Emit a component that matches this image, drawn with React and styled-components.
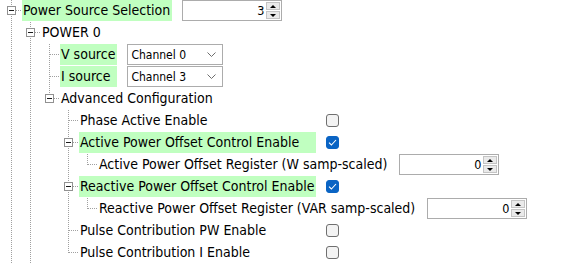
import React, { Fragment } from "react";
import styled, { createGlobalStyle, css } from "styled-components";

const LINE = "#a0a0a0";
const GREEN = "#c0ffc0";
const FONT = `"DejaVu Sans Condensed", "DejaVu Sans", Verdana, sans-serif`;

const dots = (dir) =>
  `repeating-linear-gradient(${dir}, ${LINE} 0 1px, transparent 1px 2px)`;

const tree = [
  {
    label: "Power Source Selection",
    hl: true,
    more: true,
    control: { type: "spin", value: "3" },
    children: [
      {
        label: "POWER 0",
        more: true,
        children: [
          { label: "V source", hl: true, control: { type: "select", value: "Channel 0" } },
          { label: "I source", hl: true, control: { type: "select", value: "Channel 3" } },
          {
            label: "Advanced Configuration",
            children: [
              { label: "Phase Active Enable", control: { type: "check" } },
              {
                label: "Active Power Offset Control Enable",
                hl: true,
                control: { type: "check", checked: true },
                children: [
                  {
                    label: "Active Power Offset Register (W samp-scaled)",
                    control: { type: "spin", value: "0" },
                  },
                ],
              },
              {
                label: "Reactive Power Offset Control Enable",
                hl: true,
                control: { type: "check", checked: true },
                children: [
                  {
                    label: "Reactive Power Offset Register (VAR samp-scaled)",
                    control: { type: "spin", value: "0" },
                  },
                ],
              },
              { label: "Pulse Contribution PW Enable", control: { type: "check" } },
              { label: "Pulse Contribution I Enable", control: { type: "check" } },
            ],
          },
        ],
      },
    ],
  },
];

function Control({ control }) {
  if (control.type === "spin") {
    return (
      <Spinner>
        <SpinValue>{control.value}</SpinValue>
        <SpinButtons>
          <SpinButton>
            <Arrow $up />
          </SpinButton>
          <SpinButton>
            <Arrow />
          </SpinButton>
        </SpinButtons>
      </Spinner>
    );
  }
  if (control.type === "select") {
    return (
      <Select>
        <SelectValue>{control.value}</SelectValue>
        <svg width="9" height="6" viewBox="0 0 9 6">
          <path d="M0.5 0.5 L4.5 4.5 L8.5 0.5" fill="none" stroke="#6d6d6d" strokeWidth="1" />
        </svg>
      </Select>
    );
  }
  return (
    <Check $checked={control.checked}>
      {control.checked && (
        <svg width="9" height="7" viewBox="0 0 9 7">
          <path d="M1 3.6 L3.4 6 L8 1" fill="none" stroke="#fff" strokeWidth="1.1" />
        </svg>
      )}
    </Check>
  );
}

function renderGroup(nodes, guides, nested) {
  return (
    <Group $nested={nested}>
      {nodes.map((n, i) => {
        const last = i === nodes.length - 1 && !n.more;
        return (
          <Fragment key={n.label}>
            <Row>
              <Lead $span={!n.control}>
                {guides.map((g, k) => (
                  <Guide key={k} $pipe={g} />
                ))}
                <Connector $last={last}>{n.children && <Expander />}</Connector>
                <Label $hl={n.hl}>{n.label}</Label>
              </Lead>
              {n.control && (
                <Cell>
                  <Control control={n.control} />
                </Cell>
              )}
            </Row>
            {n.children && renderGroup(n.children, [...guides, !last], true)}
          </Fragment>
        );
      })}
    </Group>
  );
}

export default function App() {
  return (
    <>
      <GlobalStyle />
      <Page>{renderGroup(tree, [], false)}</Page>
    </>
  );
}

const GlobalStyle = createGlobalStyle`
  html, body {
    margin: 0;
    background: #fff;
    overflow: hidden;
  }
`;

const Page = styled.div`
  padding-top: 0;
  font-family: ${FONT};
  font-size: 14px;
  color: #000;
`;

const Group = styled.div`
  display: grid;
  grid-template-columns: max-content max-content;
  column-gap: 10px;
  justify-content: start;
  ${(p) =>
    p.$nested &&
    css`
      grid-column: 1 / -1;
      contain: inline-size;
    `}
`;

const Row = styled.div`
  display: grid;
  grid-column: 1 / -1;
  grid-template-columns: subgrid;
  height: 22px;
`;

const Lead = styled.div`
  display: flex;
  align-items: flex-start;
  height: 22px;
  ${(p) =>
    p.$span &&
    css`
      grid-column: 1 / -1;
      contain: inline-size;
    `}
`;

const Guide = styled.span`
  flex: none;
  width: 19px;
  height: 22px;
  background: ${(p) => (p.$pipe ? `${dots("to bottom")} 11px 0 / 1px 100% no-repeat` : "none")};
`;

const Connector = styled.span`
  flex: none;
  width: 22px;
  height: 22px;
  background: ${(p) => `${dots("to bottom")} 11px 0 / 1px ${p.$last ? "11px" : "100%"} no-repeat,
    ${dots("to right")} 12px 10px / 10px 1px no-repeat`};
`;

const Expander = styled.span`
  display: block;
  box-sizing: border-box;
  width: 9px;
  height: 9px;
  margin: 6px 0 0 7px;
  border: 1px solid #919191;
  background: linear-gradient(#1a1a1a, #1a1a1a) center / 5px 1px no-repeat, #fff;
`;

const Label = styled.span`
  flex: 1;
  height: 21px;
  line-height: 21px;
  padding: 0 2px 0 1px;
  white-space: nowrap;
  background: ${(p) => (p.$hl ? GREEN : "transparent")};
`;

const Cell = styled.div`
  display: flex;
  align-items: center;
  height: 21px;
`;

const Spinner = styled.div`
  display: flex;
  box-sizing: border-box;
  width: 100px;
  height: 21px;
  padding: 1px;
  border: 1px solid #acacac;
  background: #fff;
`;

const SpinValue = styled.span`
  flex: 1;
  text-align: right;
  padding-right: 2px;
  line-height: 17px;
  font-size: 12.5px;
`;

const SpinButtons = styled.div`
  display: flex;
  flex-direction: column;
  gap: 1px;
  width: 14px;
`;

const SpinButton = styled.div`
  flex: 1;
  display: flex;
  align-items: center;
  justify-content: center;
  box-sizing: border-box;
  border: 1px solid #c4c4c4;
  background: #eaeaea;
`;

const Arrow = styled.span`
  width: 0;
  height: 0;
  border-left: 3px solid transparent;
  border-right: 3px solid transparent;
  ${(p) => (p.$up ? "border-bottom: 3px solid #000;" : "border-top: 3px solid #000;")}
`;

const Select = styled.div`
  display: flex;
  align-items: center;
  justify-content: space-between;
  box-sizing: border-box;
  width: 96px;
  height: 21px;
  padding: 0 6px 0 3px;
  border: 1px solid #acacac;
  background: #fff;
`;

const SelectValue = styled.span`
  font-size: 12px;
  white-space: nowrap;
`;

const Check = styled.span`
  display: flex;
  align-items: center;
  justify-content: center;
  box-sizing: border-box;
  width: 13px;
  height: 13px;
  border-radius: 3px;
  border: 1px solid ${(p) => (p.$checked ? "#0a64c4" : "#6f6f6f")};
  background: ${(p) => (p.$checked ? "#0a64c4" : "#f3f3f3")};
`;
